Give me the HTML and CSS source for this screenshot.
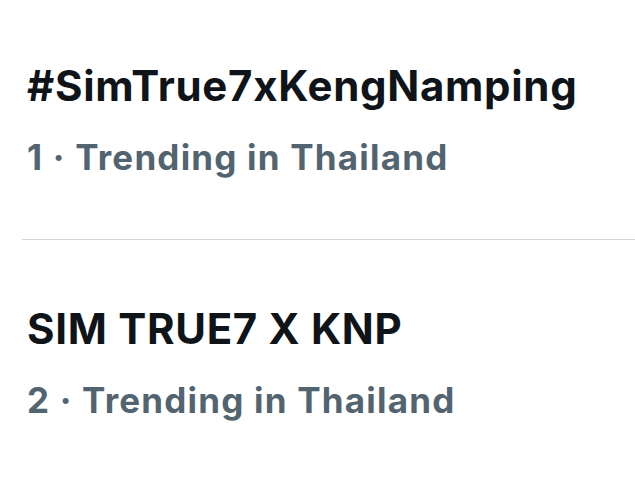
FILE: index.html
```html
<!DOCTYPE html>
<html lang="en">
<head>
  <meta charset="UTF-8">
  <meta name="viewport" content="width=device-width, initial-scale=1.0">
  <title>Trending</title>
  <link rel="stylesheet" href="styles.css">
</head>
<body>

  <div class="trends">
    <div class="trend">
      <div class="trend-name">#SimTrue7xKengNamping</div>
      <div class="trend-meta">1 · Trending in Thailand</div>
    </div>

    <div class="trend">
      <div class="trend-name">SIM TRUE7 X KNP</div>
      <div class="trend-meta">2 · Trending in Thailand</div>
    </div>
  </div>

</body>
</html>
```

FILE: styles.css
```css
* { box-sizing: border-box; }
body {
  margin: 0;
  background: #fff;
  font-family: 'Inter', sans-serif;
}
.trends {
  padding-top: 62px;
}
.trend {
  padding-left: 27px;
  padding-bottom: 62px;
}
.trend + .trend {
  border-top: 1px solid #cfd9de;
  margin-left: 22px;
  padding-left: 5px;
  padding-top: 65px;
}
.trend-name {
  font-size: 42px;
  line-height: 48px;
  font-weight: 700;
  letter-spacing: 0.7px;
  color: #0f1419;
  white-space: nowrap;
}
.trend-meta {
  margin-top: 27px;
  font-size: 35px;
  line-height: 40px;
  font-weight: 700;
  letter-spacing: 1.2px;
  color: #536471;
  white-space: nowrap;
}
```
